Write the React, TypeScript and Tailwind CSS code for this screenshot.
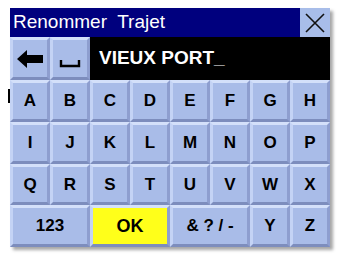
const keyCls =
  "flex items-center justify-center bg-[#a9bce8] border-[3px] border-t-[#d4e0fa] border-l-[#c4d3f5] border-b-[#7d8dbd] border-r-[#8e9ecf] text-black font-bold text-[17px]";

function Key({ label, span, yellow }: { label: string; span?: boolean; yellow?: boolean }) {
  if (yellow) {
    return (
      <div className="col-span-2 flex items-center justify-center bg-[#ffff1a] border-[3px] border-t-[#d4e0fa] border-l-[#c4d3f5] border-b-[#7d8dbd] border-r-[#8e9ecf] text-black font-bold text-[18px]">
        {label}
      </div>
    );
  }
  return <div className={span ? `${keyCls} col-span-2` : keyCls}>{label}</div>;
}

export default function App() {
  const rows = ["ABCDEFGH", "IJKLMNOP", "QRSTUVWX"];
  return (
    <div
      className="w-[337px] h-[254px] bg-white pl-[10px] pt-[8px] relative"
      style={{ fontFamily: '"Liberation Sans", Arial, sans-serif' }}
    >
      {/* small mark on left edge */}
      <div className="absolute left-[8px] top-[89px] w-[2px] h-[14px] bg-black" />
      <div className="w-[320px] h-[239px] flex flex-col shadow-[3px_3px_3px_rgba(0,0,0,0.35)]">
        {/* Title */}
        <div className="h-[29px] flex">
          <div className="flex-1 bg-[#00007e] text-white text-[19px] pl-[3px] flex items-center">
            Renommer&nbsp; Trajet
          </div>
          <div className="w-[30px] bg-[#a8bde9] flex items-center justify-center">
            <svg width="22" height="22" viewBox="0 0 22 22">
              <path d="M2 2 L20 20 M20 2 L2 20" stroke="#111" strokeWidth="1.6" fill="none" />
            </svg>
          </div>
        </div>
        {/* Input row */}
        <div className="h-[43px] flex">
          <div className={`${keyCls} w-[40px]`}>
            <svg width="28" height="20" viewBox="0 0 28 20">
              <path d="M1 10 L11 1 L11 6 L27 6 L27 14 L11 14 L11 19 Z" fill="#000" />
            </svg>
          </div>
          <div className={`${keyCls} w-[40px] pt-[8px]`}>
            <svg width="22" height="10" viewBox="0 0 22 10">
              <path d="M2 2 L2 8 L20 8 L20 2" stroke="#000" strokeWidth="2.4" fill="none" />
            </svg>
          </div>
          <div className="flex-1 bg-black text-white font-bold text-[19px] pl-[9px] flex items-center">
            VIEUX PORT_
          </div>
        </div>
        {/* Keyboard */}
        <div className="flex-1 grid grid-cols-8 grid-rows-4">
          {rows.map((r) =>
            r.split("").map((c) => <Key key={c} label={c} />)
          )}
          <Key label="123" span />
          <Key label="OK" yellow />
          <Key label="& ? / -" span />
          <Key label="Y" />
          <Key label="Z" />
        </div>
      </div>
    </div>
  );
}
